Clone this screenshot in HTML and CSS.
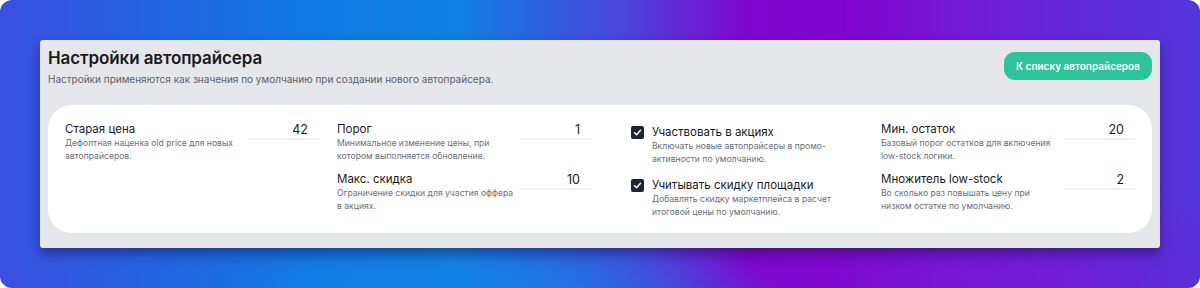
FILE: index.html
```html
<!DOCTYPE html>
<html lang="ru">
<head>
<meta charset="utf-8">
<link rel="stylesheet" href="styles.css">
</head>
<body>
<div class="bg">
  <section class="card">
    <header class="card-head">
      <div class="head-text">
        <h1 class="title">Настройки автопрайсера</h1>
        <p class="subtitle">Настройки применяются как значения по умолчанию при создании нового автопрайсера.</p>
      </div>
      <button class="btn">К списку автопрайсеров</button>
    </header>
    <div class="panel">
      <div class="col">
        <div class="field">
          <div class="field-text">
            <div class="label">Старая цена</div>
            <div class="desc">Дефолтная наценка old price для новых автопрайсеров.</div>
          </div>
          <div class="input">42</div>
        </div>
      </div>
      <div class="col">
        <div class="field">
          <div class="field-text">
            <div class="label">Порог</div>
            <div class="desc">Минимальное изменение цены, при котором выполняется обновление.</div>
          </div>
          <div class="input">1</div>
        </div>
        <div class="field">
          <div class="field-text">
            <div class="label">Макс. скидка</div>
            <div class="desc">Ограничение скидки для участия оффера в акциях.</div>
          </div>
          <div class="input">10</div>
        </div>
      </div>
      <div class="col col-check">
        <div class="check">
          <span class="box"><svg viewBox="0 0 12 12" width="9" height="9"><path d="M2 6.3 L4.8 9 L10 3" fill="none" stroke="#fff" stroke-width="2" stroke-linecap="round" stroke-linejoin="round"/></svg></span>
          <div class="field-text">
            <div class="label">Участвовать в акциях</div>
            <div class="desc">Включать новые автопрайсеры в промо-активности по умолчанию.</div>
          </div>
        </div>
        <div class="check">
          <span class="box"><svg viewBox="0 0 12 12" width="9" height="9"><path d="M2 6.3 L4.8 9 L10 3" fill="none" stroke="#fff" stroke-width="2" stroke-linecap="round" stroke-linejoin="round"/></svg></span>
          <div class="field-text">
            <div class="label">Учитывать скидку площадки</div>
            <div class="desc">Добавлять скидку маркетплейса в расчет итоговой цены по умолчанию.</div>
          </div>
        </div>
      </div>
      <div class="col">
        <div class="field">
          <div class="field-text">
            <div class="label">Мин. остаток</div>
            <div class="desc">Базовый порог остатков для включения low-stock логики.</div>
          </div>
          <div class="input">20</div>
        </div>
        <div class="field">
          <div class="field-text">
            <div class="label">Множитель low-stock</div>
            <div class="desc">Во сколько раз повышать цену при низком остатке по умолчанию.</div>
          </div>
          <div class="input">2</div>
        </div>
      </div>
    </div>
  </section>
</div>
</body>
</html>
```

FILE: styles.css
```css
* { box-sizing: border-box; margin: 0; padding: 0; }
html, body { width: 1200px; height: 288px; background: #ffffff; overflow: hidden; }
body { font-family: Inter, "Noto Sans", sans-serif; }

.bg {
  width: 1200px;
  height: 288px;
  border-radius: 12px;
  padding: 40px 40px 0 40px;
  background:
    radial-gradient(ellipse 420px 160px at 500px 320px, rgba(20,130,230,0.95), rgba(20,130,230,0) 70%),
    radial-gradient(ellipse 420px 200px at 1000px 300px, rgba(120,20,210,0.7), rgba(120,20,210,0) 70%),
    linear-gradient(90deg, #3a4fe0 0%, #1177e2 25%, #0f7fe3 38%, #4a44da 52%, #7d08cc 62%, #8105cc 70%, #6a22d6 85%, #5237da 100%);
}

.card {
  width: 1120px;
  height: 208px;
  background: #e5e7eb;
  border-radius: 3px;
  padding: 8px 8px 15px 8px;
  box-shadow: 0 6px 12px rgba(20, 10, 60, 0.45);
  display: flex;
  flex-direction: column;
}

.card-head {
  display: flex;
  justify-content: space-between;
  align-items: flex-start;
  height: 57px;
}

.title {
  font-size: 17px;
  font-weight: 600;
  color: #1a1a1f;
  line-height: 20px;
  letter-spacing: -0.1px;
}

.subtitle {
  font-size: 10px;
  color: #5d6068;
  line-height: 14px;
  margin-top: 4px;
}

.btn {
  margin-top: 4px;
  width: 148px;
  height: 28px;
  border: none;
  border-radius: 11px;
  background: #2ec39b;
  color: #ffffff;
  font-family: Inter, "Noto Sans", sans-serif;
  font-size: 10px;
  font-weight: 600;
}

.panel {
  flex: 1;
  background: #ffffff;
  border-radius: 24px;
  padding: 17px 16px 0 17px;
  display: grid;
  grid-template-columns: repeat(4, 255px);
  column-gap: 17px;
  align-content: start;
}

.col {
  display: flex;
  flex-direction: column;
  gap: 10px;
}

.field {
  display: flex;
  justify-content: space-between;
  align-items: flex-start;
  height: 40px;
}

.field-text { width: 180px; }

.label {
  font-size: 11.5px;
  color: #1a1a1f;
  line-height: 15px;
}

.desc {
  font-size: 8.6px;
  color: #6b6e76;
  line-height: 12.5px;
}

.input {
  width: 72px;
  height: 18px;
  border-bottom: 2px solid #f1f2f4;
  text-align: right;
  padding-right: 12px;
  font-size: 12.5px;
  color: #1a1a1f;
  line-height: 16px;
}

.col-check { padding-left: 22px; padding-top: 3px; gap: 13px; }

.check {
  display: flex;
  gap: 8px;
  align-items: flex-start;
  height: 40px;
}

.check .field-text { width: 200px; }

.box {
  width: 13px;
  height: 13px;
  flex: none;
  margin-top: 1px;
  background: #1e2235;
  border-radius: 2px;
  display: flex;
  align-items: center;
  justify-content: center;
}
```
